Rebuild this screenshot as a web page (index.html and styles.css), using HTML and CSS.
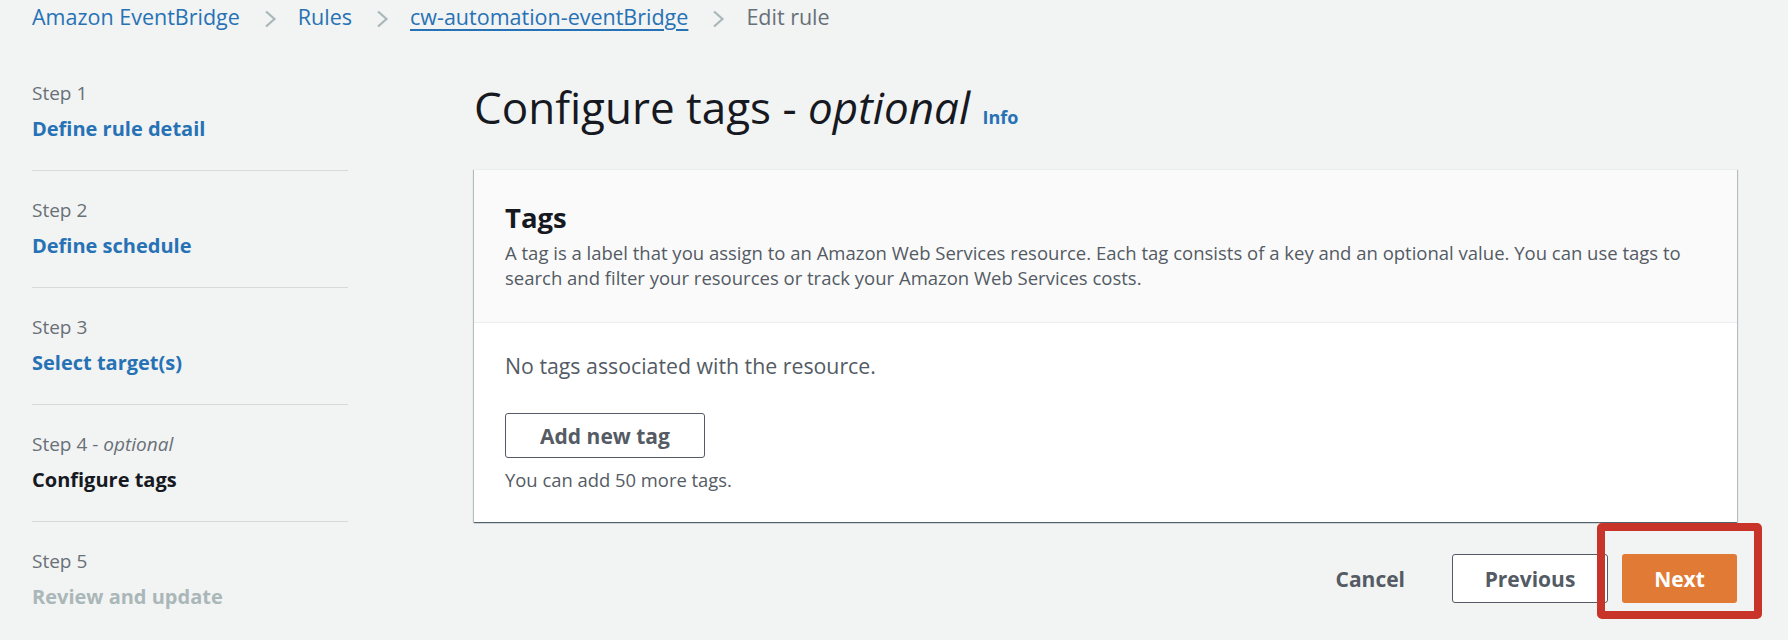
FILE: index.html
```html
<!DOCTYPE html>
<html lang="en">
<head>
<meta charset="utf-8">
<title>Edit rule - Configure tags</title>
<link rel="stylesheet" href="styles.css">
</head>
<body>
<nav class="breadcrumbs">
  <a class="crumb" href="#">Amazon EventBridge</a>
  <svg class="chev" viewBox="0 0 14 18" width="14" height="18"><path d="M3 1.5 L11.5 9 L3 16.5" fill="none" stroke="#aab7b8" stroke-width="2.2"/></svg>
  <a class="crumb" href="#">Rules</a>
  <svg class="chev" viewBox="0 0 14 18" width="14" height="18"><path d="M3 1.5 L11.5 9 L3 16.5" fill="none" stroke="#aab7b8" stroke-width="2.2"/></svg>
  <a class="crumb crumb-u" href="#">cw-automation-eventBridge</a>
  <svg class="chev" viewBox="0 0 14 18" width="14" height="18"><path d="M3 1.5 L11.5 9 L3 16.5" fill="none" stroke="#aab7b8" stroke-width="2.2"/></svg>
  <span class="crumb-current">Edit rule</span>
</nav>

<div class="layout">
  <ol class="steps">
    <li class="step">
      <div class="step-label">Step 1</div>
      <a class="step-title" href="#">Define rule detail</a>
    </li>
    <li class="step">
      <div class="step-label">Step 2</div>
      <a class="step-title" href="#">Define schedule</a>
    </li>
    <li class="step">
      <div class="step-label">Step 3</div>
      <a class="step-title" href="#">Select target(s)</a>
    </li>
    <li class="step">
      <div class="step-label">Step 4 - <i>optional</i></div>
      <span class="step-title step-current">Configure tags</span>
    </li>
    <li class="step">
      <div class="step-label">Step 5</div>
      <span class="step-title step-disabled">Review and update</span>
    </li>
  </ol>

  <main class="main">
    <h1 class="page-title">Configure tags - <i>optional</i> <a class="info" href="#">Info</a></h1>

    <section class="card">
      <header class="card-header">
        <h2 class="card-title">Tags</h2>
        <p class="card-desc">A tag is a label that you assign to an Amazon Web Services resource. Each tag consists of a key and an optional value. You can use tags to search and filter your resources or track your Amazon Web Services costs.</p>
      </header>
      <div class="card-body">
        <p class="empty">No tags associated with the resource.</p>
        <button class="btn btn-normal btn-add">Add new tag</button>
        <p class="hint">You can add 50 more tags.</p>
      </div>
    </section>

    <div class="actions">
      <button class="btn btn-link">Cancel</button>
      <button class="btn btn-normal btn-prev">Previous</button>
      <span class="next-wrap">
        <button class="btn btn-primary">Next</button>
        <span class="highlight"></span>
      </span>
    </div>
  </main>
</div>
</body>
</html>
```

FILE: styles.css
```css
* { box-sizing: border-box; }

html, body {
  margin: 0;
  padding: 0;
  background: #f2f3f3;
  font-family: "Open Sans", "Noto Sans", sans-serif;
  color: #16191f;
  overflow: hidden;
}

a { text-decoration: none; }

.breadcrumbs {
  display: flex;
  align-items: center;
  height: 36px;
  padding: 0 0 3px 32px;
  font-size: 21.5px;
  line-height: 30px;
}

.crumb { color: #2672b5; }
.crumb-u { text-decoration: underline; text-decoration-thickness: 1.5px; text-underline-offset: 4px; }
.crumb-current { color: #687078; }

.chev {
  margin: 4px 21px 0 23px;
  display: block;
}

.layout {
  display: flex;
  padding: 17px 51px 0 32px;
}

.steps {
  list-style: none;
  margin: 0;
  padding: 0;
  width: 316px;
  flex: none;
}

.step {
  padding: 27px 0 27px;
  border-top: 1px solid #d5dbdb;
}
.step:first-child { border-top: none; padding-top: 28px; }

.step-label {
  font-size: 19px;
  line-height: 24px;
  color: #687078;
}

.step-title {
  display: block;
  margin-top: 10px;
  font-size: 20px;
  line-height: 28px;
  font-weight: 700;
  color: #2672b5;
}
.step-current { color: #16191f; }
.step-disabled { color: #aab7b8; }

.main {
  flex: 1;
  margin-left: 126px;
  padding-top: 29px;
}

.page-title {
  margin: 0;
  font-size: 44px;
  line-height: 50px;
  font-weight: 400;
}

.info {
  font-size: 18px;
  line-height: 0;
  font-weight: 700;
  color: #2672b5;
  margin-left: 1px;
}

.card {
  margin-top: 37px;
  background: #fff;
  box-shadow: 0 1px 1px 0 rgba(0, 28, 36, 0.5), 1px 1px 1px 0 rgba(0, 28, 36, 0.18), -1px 1px 1px 0 rgba(0, 28, 36, 0.18);
  border-top: 1px solid #eaeded;
}

.card-header {
  background: #fafafa;
  padding: 32px 31px 32px;
  border-bottom: 1px solid #eaeded;
}

.card-title {
  margin: 0;
  font-size: 27.5px;
  line-height: 32px;
  font-weight: 700;
}

.card-desc {
  margin: 6px 0 0;
  font-size: 18.5px;
  line-height: 25px;
  color: #545b64;
}

.card-body {
  padding: 30px 31px 30px;
}

.empty {
  margin: 0;
  font-size: 21.3px;
  line-height: 26px;
  color: #545b64;
}

.hint {
  margin: 10px 0 0;
  font-size: 18.4px;
  line-height: 24px;
  color: #545b64;
}

.btn {
  font-family: inherit;
  font-size: 21px;
  font-weight: 700;
  line-height: 24px;
  border-radius: 3px;
  cursor: pointer;
  display: block;
}

.btn-normal {
  background: #fff;
  border: 1px solid #545b64;
  color: #545b64;
}

.btn-add {
  margin-top: 34px;
  width: 200px;
  height: 45px;
  padding: 0;
}

.actions {
  display: flex;
  justify-content: flex-end;
  align-items: center;
  margin-top: 32px;
}

.btn-link {
  background: transparent;
  border: none;
  color: #545b64;
  height: 48px;
  padding: 0 20px;
  margin-right: 27px;
}

.btn-prev {
  width: 156px;
  height: 49px;
  padding: 0;
}

.next-wrap {
  position: relative;
  margin-left: 14px;
  display: block;
}

.btn-primary {
  width: 115px;
  height: 49px;
  padding: 0;
  background: #e07a34;
  border: none;
  color: #fff;
}

.highlight {
  position: absolute;
  left: -25px;
  top: -31px;
  right: -25px;
  bottom: -16px;
  border: 8px solid #c8342a;
  border-radius: 5px;
  pointer-events: none;
}
```
